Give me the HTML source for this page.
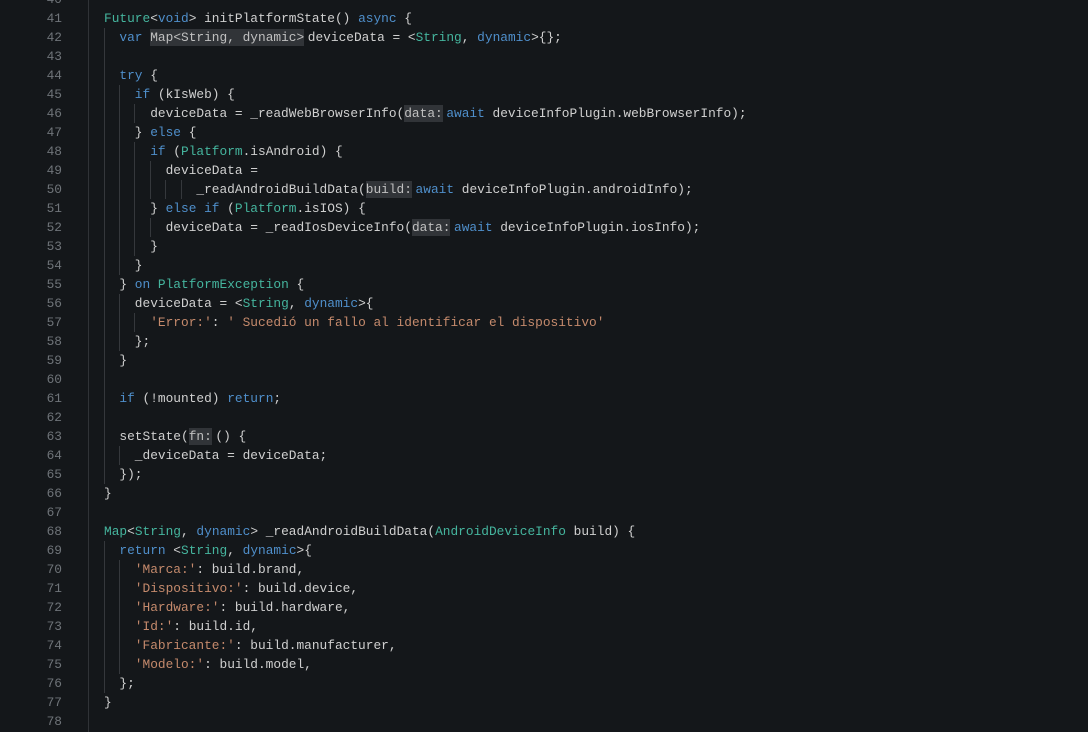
<!DOCTYPE html>
<html><head><meta charset="utf-8"><style>
html,body{margin:0;padding:0;width:1088px;height:732px;overflow:hidden;background:#14171a}
#e{position:relative;width:1088px;height:732px;overflow:hidden;font:12.83px/19px "Liberation Mono",monospace;color:#d0d0d0}
.gl{position:absolute;left:88px;top:0;width:1px;height:732px;background:#303337}
.g{position:absolute;width:1px;background:#35383c}
#n{position:absolute;left:0;top:-10px;width:62px;text-align:right;color:#6f7479;white-space:pre}
#c{position:absolute;left:104px;top:-10px;white-space:pre;margin:0;font:inherit}
i{font-style:normal}
.k{color:#4f8fcb}.t{color:#45b59e}.s{color:#c58a6c}
.h{display:inline-block;line-height:17px;height:17px;background:#313438;color:#c0c0c0;margin-right:3.6px}
</style></head><body><div id="e">
<div class="gl"></div>
<div class="g" style="left:104px;top:28px;height:456px"></div>
<div class="g" style="left:104px;top:541px;height:152px"></div>
<div class="g" style="left:119px;top:85px;height:190px"></div>
<div class="g" style="left:119px;top:294px;height:57px"></div>
<div class="g" style="left:119px;top:446px;height:19px"></div>
<div class="g" style="left:119px;top:560px;height:114px"></div>
<div class="g" style="left:134px;top:104px;height:19px"></div>
<div class="g" style="left:134px;top:142px;height:114px"></div>
<div class="g" style="left:134px;top:313px;height:19px"></div>
<div class="g" style="left:150px;top:161px;height:38px"></div>
<div class="g" style="left:150px;top:218px;height:19px"></div>
<div class="g" style="left:165px;top:180px;height:19px"></div>
<div class="g" style="left:181px;top:180px;height:19px"></div>
<div id="n">40
41
42
43
44
45
46
47
48
49
50
51
52
53
54
55
56
57
58
59
60
61
62
63
64
65
66
67
68
69
70
71
72
73
74
75
76
77
78</div>
<pre id="c">

<i class="t">Future</i>&lt;<i class="k">void</i>&gt; initPlatformState() <i class="k">async</i> {
  <i class="k">var</i> <i class="h">Map&lt;String, dynamic&gt;</i>deviceData = &lt;<i class="t">String</i>, <i class="k">dynamic</i>&gt;{};

  <i class="k">try</i> {
    <i class="k">if</i> (kIsWeb) {
      deviceData = _readWebBrowserInfo(<i class="h">data:</i><i class="k">await</i> deviceInfoPlugin.webBrowserInfo);
    } <i class="k">else</i> {
      <i class="k">if</i> (<i class="t">Platform</i>.isAndroid) {
        deviceData =
            _readAndroidBuildData(<i class="h">build:</i><i class="k">await</i> deviceInfoPlugin.androidInfo);
      } <i class="k">else if</i> (<i class="t">Platform</i>.isIOS) {
        deviceData = _readIosDeviceInfo(<i class="h">data:</i><i class="k">await</i> deviceInfoPlugin.iosInfo);
      }
    }
  } <i class="k">on</i> <i class="t">PlatformException</i> {
    deviceData = &lt;<i class="t">String</i>, <i class="k">dynamic</i>&gt;{
      <i class="s">'Error:'</i>: <i class="s">' Sucedió un fallo al identificar el dispositivo'</i>
    };
  }

  <i class="k">if</i> (!mounted) <i class="k">return</i>;

  setState(<i class="h">fn:</i>() {
    _deviceData = deviceData;
  });
}

<i class="t">Map</i>&lt;<i class="t">String</i>, <i class="k">dynamic</i>&gt; _readAndroidBuildData(<i class="t">AndroidDeviceInfo</i> build) {
  <i class="k">return</i> &lt;<i class="t">String</i>, <i class="k">dynamic</i>&gt;{
    <i class="s">'Marca:'</i>: build.brand,
    <i class="s">'Dispositivo:'</i>: build.device,
    <i class="s">'Hardware:'</i>: build.hardware,
    <i class="s">'Id:'</i>: build.id,
    <i class="s">'Fabricante:'</i>: build.manufacturer,
    <i class="s">'Modelo:'</i>: build.model,
  };
}
</pre>
</div></body></html>
